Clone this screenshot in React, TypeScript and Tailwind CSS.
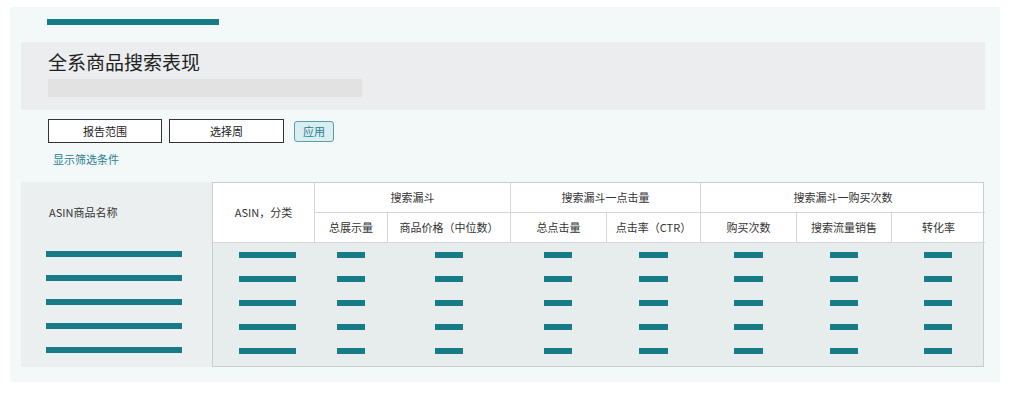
const COLS = "grid-cols-[101px_73px_123px_96px_94px_96px_95px_94px]";

const SUB_HEADERS = ["总展示量", "商品价格（中位数）", "总点击量", "点击率（CTR）", "购买次数", "搜索流量销售", "转化率"];

const ROWS = [0, 1, 2, 3, 4];

function Bar({ w }: { w: string }) {
  return <div className={`${w} h-[6px] bg-[#177b88]`} />;
}

export default function App() {
  return (
    <div className="w-[1015px] h-[408px] bg-white pt-[7px] pl-[10px] font-['Noto_Sans_CJK_SC','Noto_Sans',sans-serif] text-[#222]">
      <div className="w-[990px] h-[375px] bg-[#f3f9f9] pt-[12px] pl-[11px] pr-[15px]">
        <div className="ml-[26px] w-[172px] h-[6px] bg-[#167c87]" />

        <div className="mt-[17px] h-[68px] bg-[#ebedee] pl-[27px] pt-[8px]">
          <h1 className="text-[19px] leading-[24px] font-normal">全系商品搜索表现</h1>
          <div className="mt-[5px] w-[314px] h-[18px] bg-[#e2e2e3]" />
        </div>

        <div className="mt-[9px] ml-[27px] flex items-center">
          <button className="w-[114px] h-[24px] border border-[#333] bg-white text-[11px] leading-none">报告范围</button>
          <button className="ml-[7px] w-[115px] h-[24px] border border-[#333] bg-white text-[11px] leading-none">选择周</button>
          <button className="ml-[10px] w-[40px] h-[21px] rounded-[3px] border border-[#5c9fa6] bg-[#d9eef0] text-[#2b7f8a] text-[11px] leading-none">应用</button>
        </div>

        <div className="mt-[8px] ml-[32px] text-[11px] leading-[16px] text-[#2a8090]">显示筛选条件</div>

        <div className="mt-[15px] flex">
          <div className="w-[191px] bg-[#eceff0]">
            <div className="h-[60px] flex items-center pl-[28px] text-[11px] text-[#333]">ASIN商品名称</div>
            <div className="pb-[4px]">
              {ROWS.map((r) => (
                <div key={r} className="h-[24px] flex items-center pl-[25px]">
                  <Bar w="w-[136px]" />
                </div>
              ))}
            </div>
          </div>

          <div className="w-[772px] border border-[#c9cdcd] bg-[#e7ecec]">
            <div className={`grid ${COLS} grid-rows-[30px_30px] bg-white text-[11px] text-[#333]`}>
              <div className="row-span-2 flex items-center justify-center border-b border-[#d3d7d7]">ASIN，分类</div>
              <div className="col-span-2 flex items-center justify-center border-l border-b border-[#d3d7d7]">搜索漏斗</div>
              <div className="col-span-2 flex items-center justify-center border-l border-b border-[#d3d7d7]">搜索漏斗一点击量</div>
              <div className="col-span-3 flex items-center justify-center border-l border-b border-[#d3d7d7]">搜索漏斗一购买次数</div>
              {SUB_HEADERS.map((h) => (
                <div key={h} className="flex items-center justify-center border-l border-b border-[#d3d7d7]">{h}</div>
              ))}
            </div>
            <div className="pb-[3px]">
              {ROWS.map((r) => (
                <div key={r} className={`grid ${COLS} h-[24px] items-center justify-items-center`}>
                  <div className="pl-[8px]"><Bar w="w-[57px]" /></div>
                  <Bar w="w-[28px]" />
                  <Bar w="w-[28px]" />
                  <Bar w="w-[28px]" />
                  <Bar w="w-[29px]" />
                  <Bar w="w-[29px]" />
                  <Bar w="w-[28px]" />
                  <Bar w="w-[28px]" />
                </div>
              ))}
            </div>
          </div>
        </div>
      </div>
    </div>
  );
}
